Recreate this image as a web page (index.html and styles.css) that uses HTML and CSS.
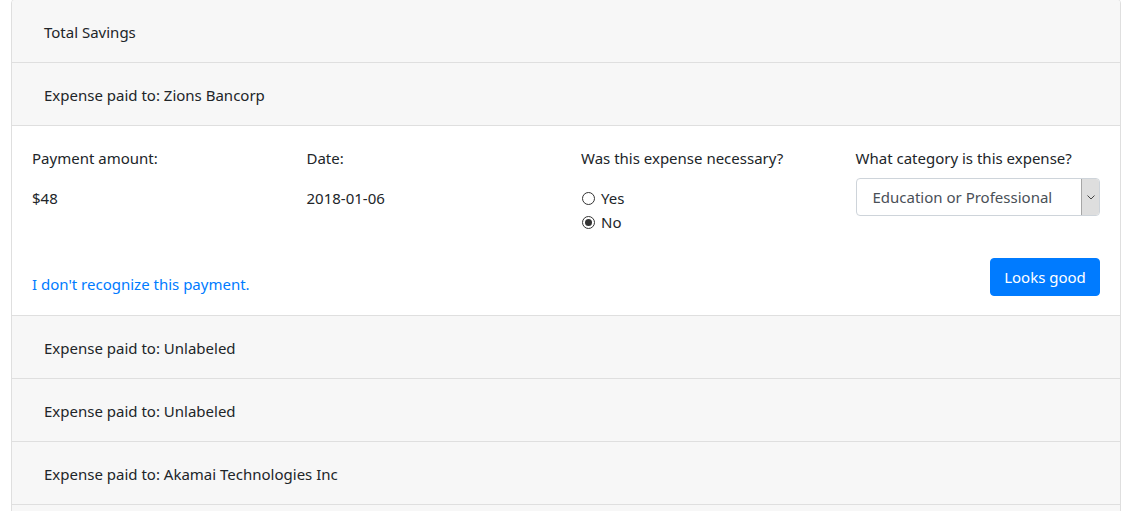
FILE: index.html
```html
<!DOCTYPE html>
<html>
<head>
<meta charset="utf-8">
<link rel="stylesheet" href="styles.css">
</head>
<body>
<div class="container">
  <div class="accordion">
    <div class="card-header"><span class="toggle">Total Savings</span></div>
    <div class="card-header"><span class="toggle">Expense paid to: Zions Bancorp</span></div>
    <div class="card-body">
      <div class="row">
        <div class="col">
          <div class="label">Payment amount:</div>
          <div class="value">$48</div>
        </div>
        <div class="col">
          <div class="label">Date:</div>
          <div class="value">2018-01-06</div>
        </div>
        <div class="col">
          <div class="label">Was this expense necessary?</div>
          <div class="radios">
            <label class="radio"><input type="radio" name="nec"><span>Yes</span></label>
            <label class="radio"><input type="radio" name="nec" checked><span>No</span></label>
          </div>
        </div>
        <div class="col">
          <div class="label">What category is this expense?</div>
          <div class="select">
            <span class="select-text">Education or Professional</span>
            <span class="select-arrow"><svg width="8" height="5" viewBox="0 0 8 5"><path d="M0.5 0.5 L4 4 L7.5 0.5" fill="none" stroke="#444" stroke-width="1"/></svg></span>
          </div>
        </div>
      </div>
      <div class="footer">
        <a class="link" href="#">I don't recognize this payment.</a>
        <button class="btn">Looks good</button>
      </div>
    </div>
    <div class="card-header"><span class="toggle">Expense paid to: Unlabeled</span></div>
    <div class="card-header"><span class="toggle">Expense paid to: Unlabeled</span></div>
    <div class="card-header"><span class="toggle">Expense paid to: Akamai Technologies Inc</span></div>
    <div class="card-header"></div>
  </div>
</div>
</body>
</html>
```
FILE: styles.css
```css
* { box-sizing: border-box; }
html, body { margin: 0; padding: 0; background: #fff; }
body {
  font-family: "Noto Sans", "Open Sans", sans-serif;
  font-size: 15px;
  line-height: 24px;
  color: #212529;
  overflow: hidden;
}
.container {
  width: 1110px;
  margin-left: 11px;
  margin-top: -1px;
}
.accordion {
  border: 1px solid #dfdfdf;
  border-radius: 4px;
  overflow: hidden;
}
.card-header {
  background: #f7f7f7;
  border-bottom: 1px solid #dfdfdf;
  padding: 8px 20px 6px;
  height: 63px;
  display: flex;
  align-items: center;
}
.toggle {
  padding: 0 12px;
  line-height: 24px;
}
.card-body {
  padding: 20px;
  border-bottom: 1px solid #dfdfdf;
  height: 190px;
}
.row {
  display: grid;
  grid-template-columns: repeat(4, 1fr);
  column-gap: 0;
  margin-right: -30px;
  height: 88px;
}
.col { padding-right: 30px; }
.label { line-height: 24px; margin-bottom: 8px; }
.value { padding-top: 8px; line-height: 24px; }
.radios { padding-top: 8px; display: flex; flex-direction: column; }
.radio { display: flex; align-items: center; height: 24px; }
.radio input {
  appearance: none;
  -webkit-appearance: none;
  width: 13px;
  height: 13px;
  margin: 0 6px 0 1px;
  border: 1px solid #333;
  border-radius: 50%;
  background: #fff;
  position: relative;
}
.radio input:checked::after {
  content: "";
  position: absolute;
  left: 2px;
  top: 2px;
  width: 7px;
  height: 7px;
  border-radius: 50%;
  background: #333;
}
.select {
  width: 100%;
  height: 38px;
  border: 1px solid #ced4da;
  border-radius: 4px;
  display: flex;
  align-items: center;
  color: #495057;
  background: #fff;
}
.select-text { flex: 1; padding-left: 16px; }
.select-arrow {
  width: 18px;
  height: 36px;
  background: #dedede;
  border-left: 1px solid #a6a6a6;
  display: flex;
  align-items: center;
  justify-content: center;
  border-radius: 0 3px 3px 0;
}
.footer {
  margin-top: 24px;
  display: flex;
  justify-content: space-between;
  align-items: flex-end;
}
.link {
  color: #007bff;
  text-decoration: none;
  line-height: 24px;
  margin-bottom: 0;
}
.btn {
  font-family: inherit;
  font-size: 15px;
  line-height: 24px;
  color: #fff;
  background: #007bff;
  border: 1px solid #007bff;
  border-radius: 4px;
  padding: 6px 13px;
  height: 38px;
  width: 110px;
}
```
